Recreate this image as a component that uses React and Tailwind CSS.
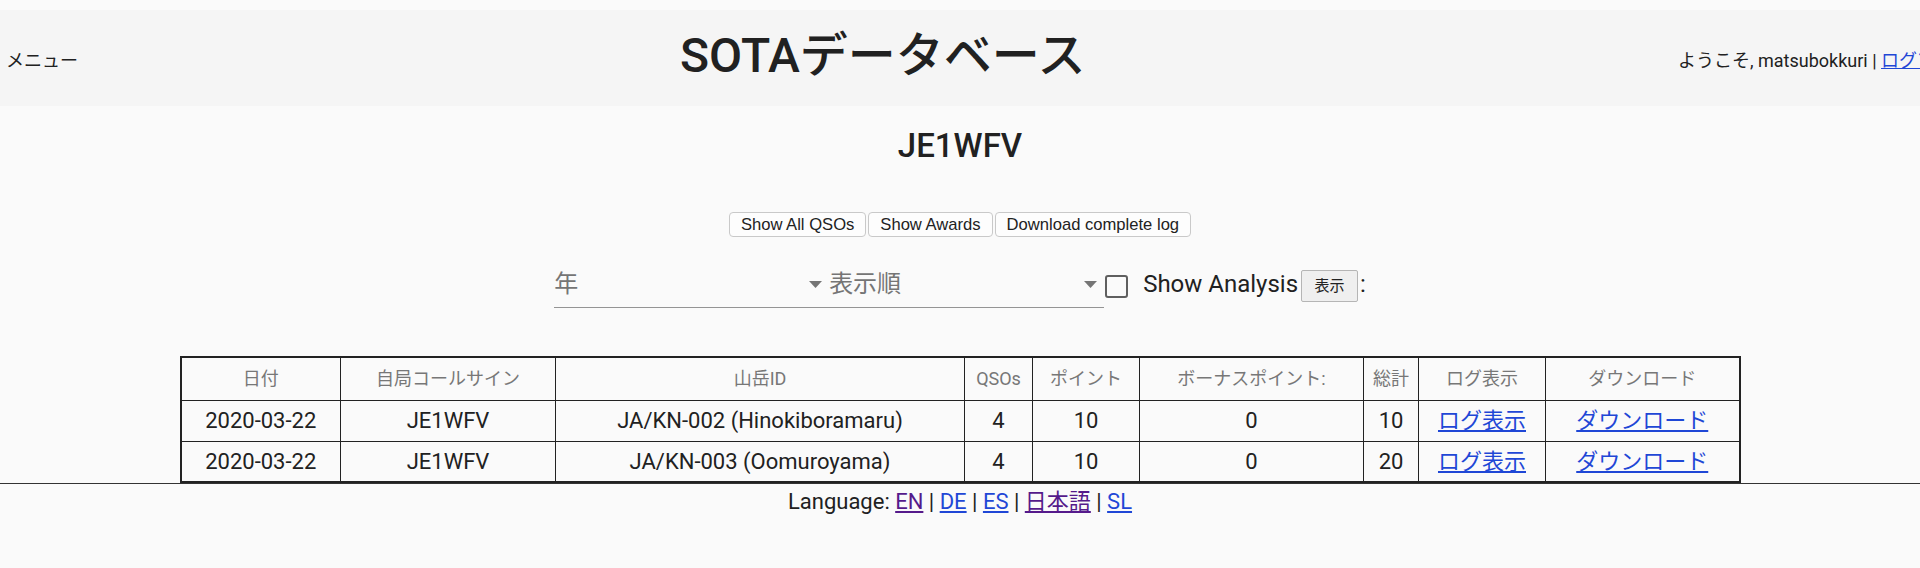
import React from 'react'

const columns = [
  { label: '日付', w: 'w-[160px]' },
  { label: '自局コールサイン', w: 'w-[215px]' },
  { label: '山岳ID', w: 'w-[409px]' },
  { label: 'QSOs', w: 'w-[68px]' },
  { label: 'ポイント', w: 'w-[107px]' },
  { label: 'ボーナスポイント:', w: 'w-[224px]' },
  { label: '総計', w: 'w-[55px]' },
  { label: 'ログ表示', w: 'w-[127px]' },
  { label: 'ダウンロード', w: 'w-[194px]' },
]

const activations = [
  { date: '2020-03-22', call: 'JE1WFV', summit: 'JA/KN-002 (Hinokiboramaru)', qsos: 4, points: 10, bonus: 0, total: 10 },
  { date: '2020-03-22', call: 'JE1WFV', summit: 'JA/KN-003 (Oomuroyama)', qsos: 4, points: 10, bonus: 0, total: 20 },
]

function DropArrow() {
  return (
    <svg width="13" height="7" viewBox="0 0 13 7" className="shrink-0">
      <path d="M0 0h13L6.5 7z" fill="#757575" />
    </svg>
  )
}

function SelectBox({ label }) {
  return (
    <div className="w-[275px] h-[36px] border-b border-[#949494] flex items-start justify-between">
      <span className="text-[24px] leading-[24px] text-[#757575]">{label}</span>
      <span className="mt-[9px] mr-[7px]"><DropArrow /></span>
    </div>
  )
}

export default function App() {
  return (
    <div className="min-h-screen w-full overflow-hidden bg-[#fafafa] pt-[10px] text-[#212121] font-[Roboto,'Noto_Sans_CJK_JP',sans-serif]">
      {/* header */}
      <header className="h-[96px] bg-[#f5f5f5] flex items-center whitespace-nowrap">
        <div className="w-[680px] shrink-0 pl-[6px] text-[18px] mt-[4px]">メニュー</div>
        <div className="w-[998px] shrink-0 text-[48px] font-medium leading-[56px] mb-[4px]">SOTAデータベース</div>
        <div className="shrink-0 text-[18px] mt-[4px]">
          ようこそ, matsubokkuri | <a href="#" className="text-[#1f47d6] underline">ログアウト</a>
        </div>
      </header>

      <main className="flex flex-col items-center">
        <h2 className="mt-[20px] text-[33px] leading-[40px] font-medium">JE1WFV</h2>

        <div className="mt-[46px] flex gap-[2px] font-['Liberation_Sans',Arial,sans-serif] text-[16.6px] text-[#222]">
          <button className="h-[25px] px-[11px] bg-[#fdfdfd] border border-[#c9c9c9] rounded-[4px] leading-[23px]">Show All QSOs</button>
          <button className="h-[25px] px-[11px] bg-[#fdfdfd] border border-[#c9c9c9] rounded-[4px] leading-[23px]">Show Awards</button>
          <button className="h-[25px] px-[11px] bg-[#fdfdfd] border border-[#c9c9c9] rounded-[4px] leading-[23px]">Download complete log</button>
        </div>

        <div className="mt-[35px] flex items-start">
          <SelectBox label="年" />
          <SelectBox label="表示順" />
          <div className="ml-[1px] mt-[3px] w-[23px] h-[23px] border-2 border-[#5f5f5f] rounded-[3px]" />
          <span className="ml-[15px] text-[24px] leading-[24px]">Show Analysis</span>
          <button className="ml-[3px] mt-[-2px] h-[32px] w-[57px] bg-[#efefef] border border-[#b5b5b5] rounded-[2px] text-[15px] text-[#222]">表示</button>
          <span className="ml-[2px] text-[24px] leading-[24px]">:</span>
        </div>

        <table className="mt-[48px] w-[1559px] table-fixed border-collapse border-2 border-[#222]">
          <colgroup>
            {columns.map((c) => (
              <col key={c.label} className={c.w} />
            ))}
          </colgroup>
          <thead>
            <tr>
              {columns.map((c) => (
                <th key={c.label} className="h-[43px] border border-[#222] text-[18px] font-normal text-[#777] text-center">
                  {c.label}
                </th>
              ))}
            </tr>
          </thead>
          <tbody>
            {activations.map((a) => (
              <tr key={a.summit} className="text-[22px]">
                <td className="h-[41px] border border-[#222] text-center">{a.date}</td>
                <td className="border border-[#222] text-center">{a.call}</td>
                <td className="border border-[#222] text-center">{a.summit}</td>
                <td className="border border-[#222] text-center">{a.qsos}</td>
                <td className="border border-[#222] text-center">{a.points}</td>
                <td className="border border-[#222] text-center">{a.bonus}</td>
                <td className="border border-[#222] text-center">{a.total}</td>
                <td className="border border-[#222] text-center">
                  <a href="#" className="text-[#1f47d6] underline">ログ表示</a>
                </td>
                <td className="border border-[#222] text-center">
                  <a href="#" className="text-[#1f47d6] underline">ダウンロード</a>
                </td>
              </tr>
            ))}
          </tbody>
        </table>
      </main>

      <footer className="border-t border-[#333] pt-[3px] text-center text-[22px] leading-[30px]">
        Language: <a href="#" className="text-[#551a8b] underline">EN</a> | <a href="#" className="text-[#1f47d6] underline">DE</a> | <a href="#" className="text-[#1f47d6] underline">ES</a> | <a href="#" className="text-[#551a8b] underline">日本語</a> | <a href="#" className="text-[#1f47d6] underline">SL</a>
      </footer>
    </div>
  )
}
